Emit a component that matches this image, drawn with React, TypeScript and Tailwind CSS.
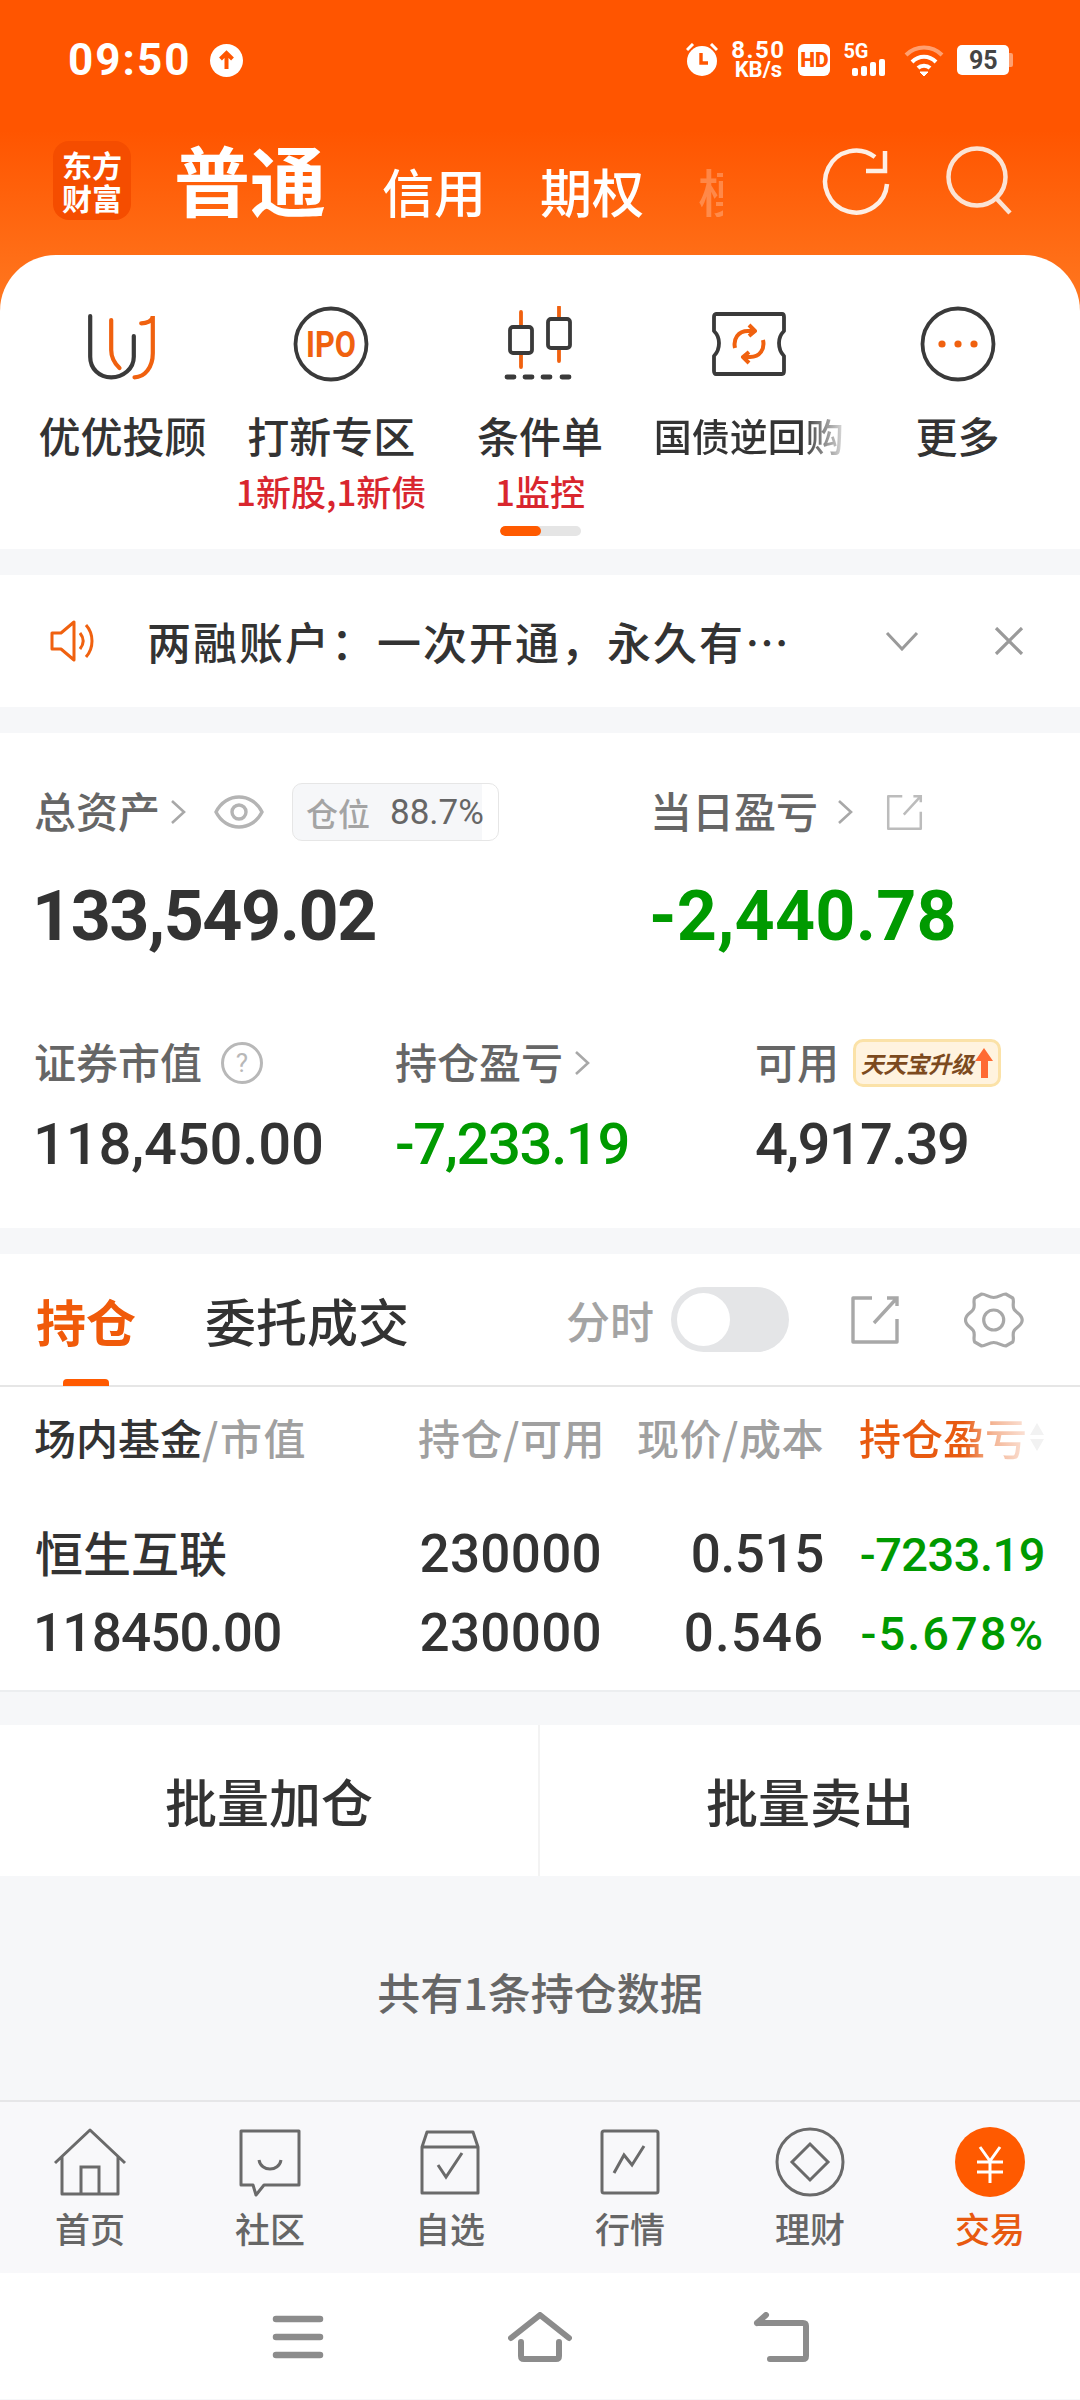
import React from "react";

const CJK = "font-['Noto_Sans_CJK_SC','Noto_Sans',sans-serif]";
const NUM = "font-['Roboto','Noto_Sans_CJK_SC',sans-serif]";

function Chevron({ className = "" }: { className?: string }) {
  return (
    <svg viewBox="0 0 18 26" className={`w-[18px] h-[26px] ${className}`} fill="none" stroke="#a8a8a8" strokeWidth="2.6">
      <path d="M3 2l12 11L3 24" />
    </svg>
  );
}

function ShareIcon({ size, color }: { size: number; color: string }) {
  return (
    <svg viewBox="0 0 50 50" width={size} height={size} fill="none" stroke={color} strokeWidth="3.4">
      <path d="M22 3H3v44h44V24" strokeLinejoin="round" />
      <path d="M24 28L47 3M37 3h10v8" />
    </svg>
  );
}

const grids = [
  {
    label: "优优投顾",
    sub: "",
    icon: (
      <svg viewBox="-3.5 0 76 76" className="w-[76px] h-[76px]" fill="none" strokeWidth="4.2" strokeLinecap="round">
        <path d="M2.7 10v40.7c0 12 9 20.6 21 20.6s22.600-8.600 22.600-20.600V30" stroke="#3a3a3a" />
        <path d="M23.700 14v30c0 7 3 13 8.300 18" stroke="#f0610f" />
        <path d="M53.700 17.300c5 0 11.600-2 11.600-7.300v37.300c0 14-8 24-18.300 24" stroke="#f0610f" />
      </svg>
    ),
  },
  {
    label: "打新专区",
    sub: "1新股,1新债",
    icon: (
      <svg viewBox="0 0 76 76" className="w-[76px] h-[76px]">
        <circle cx="38" cy="38" r="35.5" fill="none" stroke="#3a3a3a" strokeWidth="3.8" />
        <text x="38" y="51" textAnchor="middle" fontSize="37" fontWeight="700" fill="#f0610f" fontFamily="Roboto, sans-serif" textLength="50" lengthAdjust="spacingAndGlyphs">
          IPO
        </text>
      </svg>
    ),
  },
  {
    label: "条件单",
    sub: "1监控",
    icon: (
      <svg viewBox="0 0 76 76" className="w-[76px] h-[76px]" fill="none" strokeWidth="3.8" strokeLinecap="round">
        <path d="M19 6v15M19 47v14M57 1v12M57 42v13" stroke="#f0610f" />
        <rect x="8" y="21" width="22" height="26" rx="3" stroke="#3a3a3a" />
        <rect x="46" y="13" width="22" height="29" rx="3" stroke="#3a3a3a" />
        <path d="M5 71h7M23 71h7M41 71h7M60 71h7" stroke="#3a3a3a" strokeWidth="4.800" />
      </svg>
    ),
  },
  {
    label: "国债逆回购",
    sub: "",
    icon: (
      <svg viewBox="0 0 76 64" className="w-[76px] h-[64px]" fill="none" strokeWidth="3.8" strokeLinejoin="round">
        <path d="M5 2h66c1 0 2 1 2 3v14c-3 3-5 7-5 12s2 10 5 13v15c0 2-1 3-2 3H5c-1 0-2-1-2-3V44c3-3 5-8 5-13s-2-9-5-12V5c0-2 1-3 2-3z" stroke="#3a3a3a" />
        <path d="M24 36c-2-9 3-17 13-17l6 0M38 13l6 6-6 5M52 28c2 9-3 17-13 17h-6M38 51l-6-6 6-5" stroke="#f0610f" strokeWidth="4" />
      </svg>
    ),
  },
  {
    label: "更多",
    sub: "",
    icon: (
      <svg viewBox="0 0 76 76" className="w-[76px] h-[76px]">
        <circle cx="38" cy="38" r="35.5" fill="none" stroke="#3a3a3a" strokeWidth="3.8" />
        <circle cx="22" cy="38" r="3.6" fill="#f0610f" />
        <circle cx="38" cy="38" r="3.6" fill="#f0610f" />
        <circle cx="54" cy="38" r="3.6" fill="#f0610f" />
      </svg>
    ),
  },
];

const tabs = [
  {
    label: "首页",
    icon: (
      <svg viewBox="0 0 74 70" className="w-[74px] h-[70px]" fill="none" stroke="#6a6a6a" strokeWidth="3">
        <path d="M2 36L37 3l35 33M9 29v38h56V29" strokeLinejoin="round" />
        <path d="M28 67V40h18v27" />
      </svg>
    ),
  },
  {
    label: "社区",
    icon: (
      <svg viewBox="0 0 74 70" className="w-[74px] h-[70px]" fill="none" stroke="#6a6a6a" strokeWidth="3">
        <path d="M8 4h58v54H31l-8 10-3-10H8z" strokeLinejoin="round" />
        <path d="M26 33c2 12 20 12 22 0" />
      </svg>
    ),
  },
  {
    label: "自选",
    icon: (
      <svg viewBox="0 0 74 70" className="w-[74px] h-[70px]" fill="none" stroke="#6a6a6a" strokeWidth="3">
        <path d="M9 20l5-15h46l5 15v46H9zM9 20h56" strokeLinejoin="round" />
        <path d="M25 38l8 12 16-24" />
      </svg>
    ),
  },
  {
    label: "行情",
    icon: (
      <svg viewBox="0 0 74 70" className="w-[74px] h-[70px]" fill="none" stroke="#6a6a6a" strokeWidth="3">
        <rect x="9" y="4" width="56" height="62" rx="2" />
        <path d="M21 46l10-18 8 10 12-19" />
      </svg>
    ),
  },
  {
    label: "理财",
    icon: (
      <svg viewBox="0 0 74 70" className="w-[74px] h-[70px]" fill="none" stroke="#6a6a6a" strokeWidth="3">
        <circle cx="37" cy="35" r="33" />
        <path d="M37 17l18 18-18 18-18-18z" />
      </svg>
    ),
  },
  {
    label: "交易",
    icon: (
      <svg viewBox="0 0 74 70" className="w-[74px] h-[70px]" fill="none" stroke="#fff" strokeWidth="3">
        <circle cx="37" cy="35" r="35" fill="#ff5a00" stroke="none" />
        <path d="M27 20l10 14 10-14M24 35h26M24 45h26M37 34v22" />
      </svg>
    ),
  },
];

export default function App() {
  return (
    <div className={`w-[1080px] h-[2400px] overflow-hidden bg-[#f6f7f9] ${CJK}`}>
      {/* Orange top + grid sheet */}
      <div className="bg-[linear-gradient(#ff5500_0px,#ff5500_130px,#ff7a22_320px)]">
        <div className={`h-[82px] pt-[38px] flex items-center text-white ${NUM}`}>
          <span className="ml-[68px] text-[44px] font-bold leading-none tracking-[2px]">09:50</span>
          <svg viewBox="0 0 33 33" className="ml-[19px] w-[33px] h-[33px]">
            <circle cx="16.5" cy="16.5" r="16.5" fill="#fff" />
            <path d="M16.5 25V10M10.5 15l6-6 6 6" fill="none" stroke="#ff5500" strokeWidth="4" />
          </svg>
          <svg viewBox="0 0 32 34" className="ml-[443px] w-[32px] h-[34px]">
            <path d="M1 7l6-6M31 7l-6-6" stroke="#fff" strokeWidth="3" />
            <circle cx="16" cy="18" r="15" fill="#fff" />
            <path d="M15 10v10h7" fill="none" stroke="#ff5500" strokeWidth="3.4" />
          </svg>
          <div className="ml-[12px] w-[56px] flex flex-col items-center font-bold whitespace-nowrap">
            <span className="text-[24px] leading-[20px] tracking-[1.5px]">8.50</span>
            <span className="text-[22px] leading-[20px]">KB/s</span>
          </div>
          <div className="ml-[12px] w-[32px] h-[32px] rounded-[6px] bg-white text-[#ff5500] text-[21px] font-black leading-none flex items-center justify-center">HD</div>
          <div className="ml-[13px] w-[46px] h-[32px] flex flex-col">
            <span className="text-[20px] font-bold leading-[14px]">5G</span>
            <div className="ml-[9px] flex items-end gap-[3px] h-[18px]">
              <div className="w-[6px] h-[8px] rounded-[2px] bg-white" />
              <div className="w-[6px] h-[10px] rounded-[2px] bg-white" />
              <div className="w-[6px] h-[14px] rounded-[2px] bg-white" />
              <div className="w-[6px] h-[17px] rounded-[2px] bg-white" />
            </div>
          </div>
          <svg viewBox="0 0 40 32" className="ml-[15px] w-[40px] h-[32px]" fill="none" strokeWidth="4">
            <path d="M2 11c10-10 26-10 36 0" stroke="#ffa070" />
            <path d="M8 18c7-7 17-7 24 0M14 24c3-3 9-3 12 0" stroke="#fff" />
            <path d="M16 28h8l-4 4z" fill="#fff" stroke="#fff" strokeWidth="1" />
          </svg>
          <div className="ml-[13px] w-[52px] h-[30px] rounded-[5px] bg-white text-[#444] text-[25px] font-bold leading-none flex items-center justify-center">95</div>
          <div className="w-[4px] h-[14px] bg-[#ffa070] rounded-r-[2px]" />
        </div>

        <div className="h-[173px] flex items-start">
          <div className="ml-[53px] mt-[59px] w-[78px] h-[79px] rounded-[16px] bg-[#f54d00] text-white text-[30px] font-bold flex flex-col items-center justify-center">
            <span className="h-[33px] leading-[33px]">东方</span>
            <span className="h-[33px] leading-[33px]">财富</span>
          </div>
          <span className="ml-[43px] mt-[58px] text-[76px] font-bold leading-none text-white">普通</span>
          <span className="ml-[56px] mt-[83px] text-[52px] font-medium leading-none text-white">信用</span>
          <span className="ml-[54px] mt-[83px] text-[52px] font-medium leading-none text-white">期权</span>
          <div className="ml-[54px] mt-[83px] w-[25px] overflow-hidden">
            <span className="block w-[52px] text-[52px] font-medium leading-none text-white/25">模</span>
          </div>
          <svg viewBox="0 0 68 68" className="ml-[99px] mt-[66px] w-[68px] h-[68px]" fill="none" stroke="#fdeee4" strokeWidth="4.5">
            <path d="M65 36a31 31 0 1 1-12-27" />
            <path d="M63 3v20H44" />
          </svg>
          <svg viewBox="0 0 70 70" className="ml-[56px] mt-[64px] w-[70px] h-[70px]" fill="none" stroke="#fbe3d4" strokeWidth="4.5">
            <circle cx="31" cy="31" r="28.5" />
            <path d="M50 52l14 15" />
          </svg>
        </div>

        <div className="bg-white rounded-t-[56px] flex flex-col">
          <div className="px-[18px] pt-[51px] grid grid-cols-5">
            {grids.map((g) => (
              <div key={g.label} className="flex flex-col items-center">
                <div className="h-[76px] flex items-center justify-center">{g.icon}</div>
                {g.label.length === 5 ? (
                  <span className="mt-[33px] w-[190px] h-[40px] text-[38px] font-medium leading-[40px] whitespace-nowrap overflow-hidden text-transparent bg-clip-text bg-[linear-gradient(to_right,#333_78%,#ddd_100%)]">
                    {g.label}
                  </span>
                ) : (
                  <span className="mt-[33px] h-[40px] text-[42px] font-medium leading-[40px] text-[#333] whitespace-nowrap">{g.label}</span>
                )}
                <span className="mt-[20px] h-[32px] text-[35px] leading-[32px] font-medium text-[#d9262e] whitespace-nowrap">{g.sub}</span>
              </div>
            ))}
          </div>
          <div className="mt-[19px] pb-[13px] flex justify-center">
            <div className="w-[81px] h-[10px] rounded-full bg-[#e5e5e5] overflow-hidden">
              <div className="w-[41px] h-full rounded-full bg-[#ff5a00]" />
            </div>
          </div>
        </div>
      </div>

      {/* Notice */}
      <div className="mt-[26px] h-[132px] bg-white flex items-center">
        <svg viewBox="0 0 46 42" className="ml-[50px] w-[46px] h-[42px]" fill="none" stroke="#f0610f" strokeWidth="3">
          <path d="M2 13h9L24 2v38L11 29H2zM30 13c4 5 4 11 0 16M36 5c8 9 8 23 0 32" strokeLinejoin="round" />
        </svg>
        <span className="ml-[51px] w-[643px] text-[44px] font-medium leading-none text-[#333] whitespace-nowrap tracking-[2px]">两融账户：一次开通，永久有…</span>
        <svg viewBox="0 0 34 20" className="ml-[95px] w-[34px] h-[20px]" fill="none" stroke="#9a9a9a" strokeWidth="3">
          <path d="M2 2l15 16L32 2" />
        </svg>
        <svg viewBox="0 0 30 28" className="ml-[75px] w-[30px] h-[28px]" fill="none" stroke="#9a9a9a" strokeWidth="3.2">
          <path d="M2 1l26 26M28 1L2 27" />
        </svg>
      </div>

      {/* Assets */}
      <div className="mt-[26px] h-[495px] bg-white pt-[50px]">
        <div className="h-[58px] flex items-center">
          <span className="ml-[34px] mb-[4px] text-[42px] font-medium leading-none text-[#666]">总资产</span>
          <Chevron className="ml-[9px]" />
          <svg viewBox="0 0 50 34" className="ml-[27px] w-[50px] h-[34px]" fill="none" stroke="#b4b4b4" strokeWidth="3.4">
            <path d="M2 17C12 -3 38 -3 48 17 38 37 12 37 2 17z" />
            <circle cx="25" cy="17" r="7" />
          </svg>
          <div className="ml-[28px] w-[207px] h-[58px] rounded-[10px] border border-[#e6e6e6] bg-[linear-gradient(to_right,#f6f7f9_92%,#fff_92%)] flex items-center">
            <span className="ml-[13px] text-[32px] font-medium leading-none text-[#a4a4a4]">仓位</span>
            <span className={`ml-[20px] text-[35px] leading-none text-[#666] ${NUM}`}>88.7%</span>
          </div>
          <span className="ml-[151px] mb-[4px] text-[42px] font-medium leading-none text-[#666]">当日盈亏</span>
          <Chevron className="ml-[18px]" />
          <div className="ml-[32px]">
            <ShareIcon size={37} color="#bcbcbc" />
          </div>
        </div>
        <div className={`mt-[40px] h-[70px] flex items-center text-[70px] font-bold leading-none ${NUM}`}>
          <span className="ml-[32px] w-[617px] text-[#333] tracking-[-1.5px]">133,549.02</span>
          <span className="text-[#009a00] tracking-[0.2px]">-2,440.78</span>
        </div>
        <div className="mt-[88px] h-[48px] grid grid-cols-[395px_360px_1fr]">
          <div className="pl-[34px] flex items-center">
            <span className="mb-[4px] text-[42px] font-medium leading-none text-[#666]">证券市值</span>
            <svg viewBox="0 0 42 42" className="ml-[19px] w-[42px] h-[42px]">
              <circle cx="21" cy="21" r="19.5" fill="none" stroke="#b8b8b8" strokeWidth="3" />
              <text x="21" y="30" textAnchor="middle" fontSize="26" fill="#b8b8b8" fontFamily="Roboto, sans-serif">?</text>
            </svg>
          </div>
          <div className="flex items-center">
            <span className="mb-[4px] text-[42px] font-medium leading-none text-[#666]">持仓盈亏</span>
            <Chevron className="ml-[10px]" />
          </div>
          <div className="flex items-center">
            <span className="mb-[4px] text-[42px] font-medium leading-none text-[#666]">可用</span>
            <div className="ml-[14px] w-[148px] h-[48px] rounded-[10px] border-[3px] border-[#fbe2a8] bg-[#fff3df] flex items-center justify-center">
              <span className="text-[23px] font-bold italic leading-none text-[#7c4a1e] whitespace-nowrap tracking-[-0.5px]">天天宝升级</span>
              <svg viewBox="0 0 18 30" className="ml-[2px] w-[18px] h-[30px]">
                <path d="M9 0l9 13h-5v17H6V13H0z" fill="#ff6a33" />
              </svg>
            </div>
          </div>
        </div>
        <div className={`mt-[27px] h-[60px] grid grid-cols-[395px_360px_1fr] items-center text-[58px] font-medium leading-none ${NUM}`}>
          <span className="pl-[33px] text-[#333] tracking-[-0.2px]">118,450.00</span>
          <span className="text-[#009a00] tracking-[-1.400px]">-7,233.19</span>
          <span className="text-[#333] tracking-[-1.700px]">4,917.39</span>
        </div>
      </div>

      {/* Holdings */}
      <div className="mt-[26px] bg-white h-[438px] border-b-2 border-[#eceef0]">
        <div className="h-[133px] border-b-2 border-[#e6e6e6] flex items-start">
          <div className="ml-[36px] w-[100px] flex flex-col items-center">
            <span className="mt-[41px] text-[50px] font-bold leading-[50px] text-[#f05a0a]">持仓</span>
            <div className="mt-[34px] w-[46px] h-[7px] rounded-t-[4px] bg-[#ff5a00]" />
          </div>
          <span className="ml-[69px] mt-[41px] text-[51px] font-medium leading-[50px] text-[#333]">委托成交</span>
          <span className="ml-[157px] mt-[44px] text-[44px] font-medium leading-[44px] text-[#a4a4a4]">分时</span>
          <div className="ml-[17px] mt-[33px] w-[118px] h-[65px] rounded-full bg-[#e4e5e7] flex items-center pl-[6px]">
            <div className="w-[53px] h-[53px] rounded-full bg-white" />
          </div>
          <div className="ml-[61px] mt-[41px]">
            <ShareIcon size={50} color="#a8a8a8" />
          </div>
          <svg viewBox="0 0 60 58" className="ml-[64px] mt-[37px] w-[60px] h-[58px]" fill="none" stroke="#a8a8a8" strokeWidth="3.2" strokeLinejoin="round">
            <path d="M17.700 3c4 0 7 3.500 12 3.500s8-3.500 12-3.500l7 4c2 3-1 8 1.500 11.500 2.500 3.500 8 5 8 10.500s-5.500 7-8 10.500c-2.500 3.500.5 8.500-1.500 11.500l-7 4c-4 0-7-3.500-12-3.500s-8 3.500-12 3.500l-7-4c-2-3 1-8-1.500-11.500C7 36 1.500 34.500 1.500 29S7 22 9.200 18.500C11.700 15 8.700 10 10.700 7z" />
            <circle cx="29.700" cy="29" r="10" />
          </svg>
        </div>
        <div className="h-[128px] pt-[30px] pl-[35px] pr-[35px] grid grid-cols-[383px_184px_222px_221px] items-start text-[42px] font-medium leading-[40px] text-[#a0a0a0] whitespace-nowrap">
          <div className="-ml-[1px]">
            <span className="text-[#333]">场内基金</span>
            <span className="tracking-[1.500px]">/市值</span>
          </div>
          <div className="text-right tracking-[0.5px]">持仓/可用</div>
          <div className="text-right tracking-[0.5px]">现价/成本</div>
          <div className="relative pr-[18px] text-right">
            <span className="text-transparent bg-clip-text bg-[linear-gradient(to_right,#e85a10_62%,#f4b696_80%,#fbe3d8_100%)]">持仓盈亏</span>
            <svg viewBox="0 0 16 30" className="absolute right-0 top-[5px] w-[16px] h-[30px]" fill="#f2f2f2">
              <path d="M8 1l7 12H1zM8 29L1 17h14z" />
            </svg>
          </div>
        </div>
        <div className={`h-[79px] pl-[35px] pr-[35px] grid grid-cols-[383px_184px_222px_221px] items-center text-[53px] font-medium leading-none text-[#333] text-right ${NUM}`}>
          <span className={`mb-[7px] text-left text-[48px] ${CJK}`}>恒生互联</span>
          <span className="tracking-[0.3px]">230000</span>
          <span className="tracking-[-0.4px]">0.515</span>
          <span className="text-[47px] text-[#009a00] tracking-[-0.5px]">-7233.19</span>
        </div>
        <div className={`h-[79px] pl-[35px] pr-[35px] grid grid-cols-[383px_184px_222px_221px] items-center text-[53px] font-medium leading-none text-[#333] text-right ${NUM}`}>
          <span className="-ml-[2px] text-left tracking-[-0.8px]">118450.00</span>
          <span className="tracking-[0.3px]">230000</span>
          <span className="tracking-[1px]">0.546</span>
          <span className="text-[47px] text-[#009a00] tracking-[2px]">-5.678%</span>
        </div>
      </div>

      {/* Batch buttons */}
      <div className="mt-[33px] h-[151px] bg-white grid grid-cols-2 text-[52px] font-medium leading-none text-[#333]">
        <div className="border-r-2 border-[#f3f3f3] flex items-center justify-center">批量加仓</div>
        <div className="flex items-center justify-center">批量卖出</div>
      </div>

      <div className="h-[224px] flex items-start justify-center">
        <span className="mt-[94px] text-[43px] font-medium leading-none text-[#666]">共有1条持仓数据</span>
      </div>

      {/* Tab bar */}
      <div className="h-[173px] bg-[#f8f8fa] border-t-2 border-[#e6e6e8] grid grid-cols-6">
        {tabs.map((t) => (
          <div key={t.label} className="flex flex-col items-center pt-[25px]">
            {t.icon}
            <span className={`mt-[13px] text-[35px] font-medium leading-none ${t.label === "交易" ? "text-[#e85a10]" : "text-[#666]"}`}>{t.label}</span>
          </div>
        ))}
      </div>

      {/* System nav */}
      <div className="h-[126px] bg-white flex items-center justify-center gap-[180px] pt-[2px]">
        <svg viewBox="0 0 60 48" className="w-[60px] h-[48px]" fill="none" stroke="#8c8c8c" strokeWidth="6.5" strokeLinecap="round">
          <path d="M8 6h44M8 24h44M8 42h44" />
        </svg>
        <svg viewBox="0 0 64 50" className="w-[64px] h-[50px]" fill="none" stroke="#8c8c8c" strokeWidth="6" strokeLinecap="round" strokeLinejoin="round">
          <path d="M3 26L32 3l29 23M13 30v14c0 2 1 3 3 3h32c2 0 3-1 3-3V30" />
        </svg>
        <svg viewBox="0 0 60 50" className="w-[60px] h-[50px]" fill="none" stroke="#8c8c8c" strokeWidth="6" strokeLinecap="round" strokeLinejoin="round">
          <path d="M5 11h46c2 0 3 1 3 3v30c0 2-1 3-3 3H18M5 11l9-8" />
        </svg>
      </div>
    </div>
  );
}
